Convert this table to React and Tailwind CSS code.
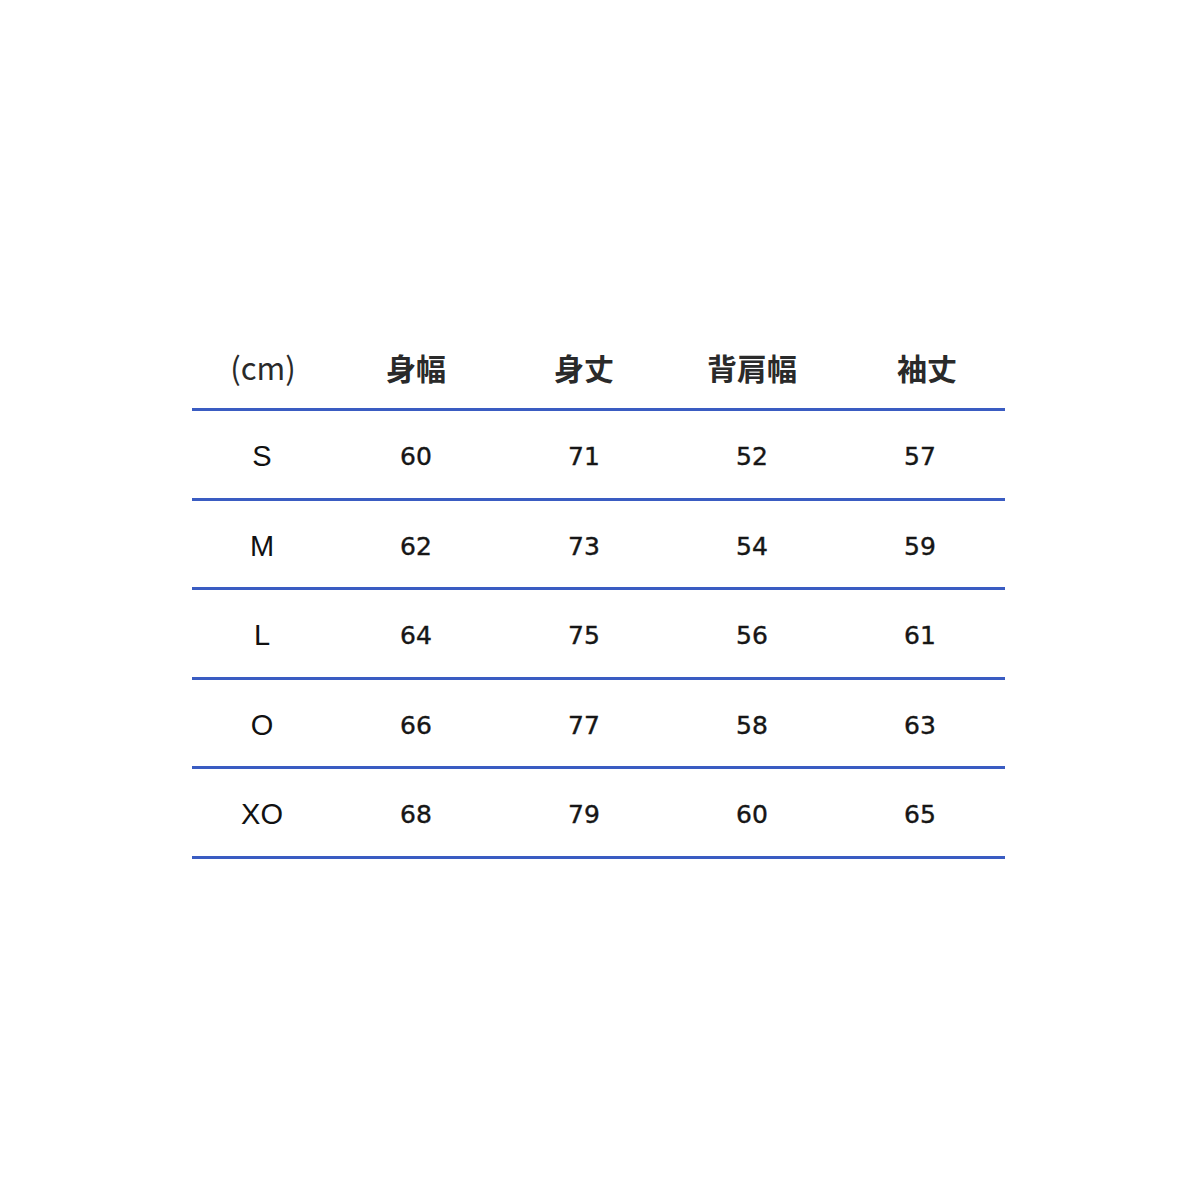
const headers = ["(cm)", "身幅", "身丈", "背肩幅", "袖丈"];

const rows = [
  ["S", "60", "71", "52", "57"],
  ["M", "62", "73", "54", "59"],
  ["L", "64", "75", "56", "61"],
  ["O", "66", "77", "58", "63"],
  ["XO", "68", "79", "60", "65"],
];

// first column is narrower than the four measurement columns
const cols = "grid grid-cols-[140px_168px_168px_168px_168px]";

export default function App() {
  return (
    <div className="min-h-[1200px] w-[1200px] bg-white pt-[325px] pl-[192px]">
      <div className="w-[813px]">
        {/* header */}
        <div className={`${cols} h-[86px] items-center border-b-[3px] border-[#3a5cc2]`}>
          <span className="text-center text-[31px] text-[#2a2a2a] font-['Noto_Sans_CJK_JP',sans-serif] leading-none pl-[2px]">
            {headers[0]}
          </span>
          {headers.slice(1).map((h, i) => (
            <span
              key={h}
              className={`text-center text-[30px] font-semibold text-[#2a2a2a] font-['Noto_Sans_CJK_JP',sans-serif] leading-none ${i === 3 ? "pl-[14px]" : ""}`}
            >
              {h}
            </span>
          ))}
        </div>

        {/* size rows */}
        {rows.map((r) => (
          <div
            key={r[0]}
            className={`${cols} h-[89.5px] items-center border-b-[3px] border-[#3a5cc2] pt-[5px]`}
          >
            <span className="text-center text-[29px] text-[#111] font-['Liberation_Sans',sans-serif] leading-none">
              {r[0]}
            </span>
            {r.slice(1).map((v, i) => (
              <span
                key={i}
                className="text-center text-[25px] text-[#161616] font-['DejaVu_Sans',sans-serif] leading-none [-webkit-text-stroke:0.4px_#161616]"
              >
                {v}
              </span>
            ))}
          </div>
        ))}
      </div>
    </div>
  );
}
